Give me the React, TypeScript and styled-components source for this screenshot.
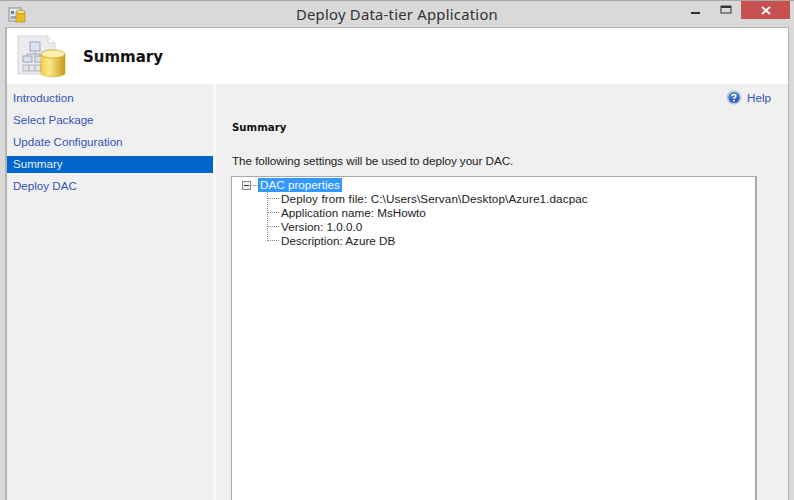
import React from "react";
import styled, { createGlobalStyle } from "styled-components";

const Global = createGlobalStyle`
  html, body { margin: 0; padding: 0; background: #d9d9d9; }
  body { font-family: "Liberation Sans", "Noto Sans", sans-serif; }
`;

const Window = styled.div`
  width: 794px;
  height: 500px;
  overflow: hidden;
  background: #d9d9d9;
  border-top: 1px solid #a8a8a8;
  box-sizing: border-box;
  display: flex;
  flex-direction: column;
`;
const TitleBar = styled.div`
  height: 26px;
  flex: none;
  display: flex;
  align-items: center;
  position: relative;
  padding-left: 8px;
`;
const Title = styled.div`
  position: absolute;
  left: 0;
  right: 0;
  top: 3px;
  text-align: center;
  font-family: "Noto Sans", sans-serif;
  font-size: 14.8px;
  line-height: 20px;
  color: #333;
  letter-spacing: 0.25px;
`;
const Controls = styled.div`
  margin-left: auto;
  display: flex;
  align-items: flex-start;
  height: 100%;
  margin-right: 4px;
`;
const CtrlBox = styled.div`
  width: 30px;
  height: 18px;
  display: flex;
  align-items: center;
  justify-content: center;
`;
const CloseBtn = styled.div`
  width: 49px;
  height: 18px;
  background: #c75050;
  display: flex;
  align-items: center;
  justify-content: center;
`;
const Client = styled.div`
  flex: 1;
  margin: 0 5px 0 5px;
  border: 1px solid #b4b4b4;
  border-left-width: 2px;
  border-bottom: 0;
  display: flex;
  flex-direction: column;
  min-height: 0;
`;
const Header = styled.div`
  height: 56px;
  flex: none;
  background: #fff;
  display: flex;
  align-items: center;
  padding-left: 10px;
  gap: 10px;
`;
const HeaderTitle = styled.div`
  font-family: "DejaVu Sans", sans-serif;
  font-weight: 700;
  font-size: 15px;
  color: #111;
  margin-top: 1px;
`;
const Body = styled.div`
  flex: 1;
  display: flex;
  min-height: 0;
`;
const Nav = styled.nav`
  width: 206px;
  flex: none;
  background: #f0f0f0;
  border-right: 3px solid #fafafa;
  padding-top: 6px;
  display: flex;
  flex-direction: column;
  gap: 5px;
`;
const NavItem = styled.div<{ $active?: boolean }>`
  height: 17px;
  line-height: 16px;
  font-size: 11.6px;
  padding-left: 6px;
  color: ${(p) => (p.$active ? "#e8eefa" : "#3355bb")};
  background: ${(p) => (p.$active ? "#0066cc" : "transparent")};
`;
const Main = styled.main`
  flex: 1;
  background: #f0f0f0;
  padding: 0 31px 0 16px;
  display: flex;
  flex-direction: column;
`;
const HelpRow = styled.div`
  display: flex;
  justify-content: flex-end;
  align-items: center;
  gap: 5px;
  height: 26px;
  margin-right: -14px;
  font-size: 11.7px;
  color: #3355bb;
`;
const SectionTitle = styled.div`
  font-family: "DejaVu Sans", sans-serif;
  font-weight: 700;
  font-size: 10.2px;
  color: #111;
  margin-top: 11px;
  height: 14px;
  line-height: 14px;
`;
const Intro = styled.div`
  font-size: 11.7px;
  color: #222;
  line-height: 15px;
  margin-top: 18px;
  letter-spacing: -0.06px;
`;
const TreeBox = styled.div`
  flex: 1;
  margin: 8px 0 -4px -1px;
  border: 1px solid #a6a9b2;
  border-right-width: 2px;
  background: #fff;
  padding: 1px 0 0 10px;
`;
const RootRow = styled.div`
  display: flex;
  align-items: center;
  height: 14px;
`;
const Expander = styled.div`
  width: 9px;
  height: 9px;
  border: 1px solid #8a8a8a;
  box-sizing: border-box;
  background: #eee;
  position: relative;
  flex: none;
  &::after {
    content: "";
    position: absolute;
    left: 1px;
    right: 1px;
    top: 3px;
    height: 1px;
    background: #333;
  }
`;
const Dash = styled.div`
  width: 7px;
  border-top: 1px dotted #888;
  flex: none;
`;
const RootLabel = styled.div`
  background: #3399ff;
  color: #f4f8ff;
  font-size: 11.7px;
  line-height: 14px;
  padding: 0 2px;
`;
const Children = styled.div`
  margin: -1px 0 0 25px;
  border-left: 1px dotted #888;
  width: fit-content;
  height: 50px;
`;
const Child = styled.div<{ $spacing?: number }>`
  display: flex;
  align-items: center;
  height: 14px;
  font-size: 11.7px;
  color: #222;
  background: #fff;
  letter-spacing: ${(p) => p.$spacing ?? 0}px;
`;
const ChildDash = styled.div`
  width: 11px;
  margin-right: 2px;
  border-top: 1px dotted #888;
  flex: none;
`;

const AppIcon = () => (
  <svg width="19" height="17" viewBox="0 0 19 17">
    <rect x="1" y="2" width="12" height="13" fill="#e8e8ee" stroke="#8a8a9a" />
    <rect x="3" y="5" width="3" height="3" fill="#5a7fc0" />
    <rect x="2.5" y="10" width="6" height="3" fill="#9ab" />
    <path d="M8 6v10h9V6z" fill="#eebb22" stroke="#a88010" strokeWidth=".6" />
    <ellipse cx="12.5" cy="6" rx="4.5" ry="1.8" fill="#f7e07a" stroke="#a88010" strokeWidth=".6" />
  </svg>
);

const WizardIcon = () => (
  <svg width="56" height="44" viewBox="0 0 56 44">
    <defs>
      <linearGradient id="cyl" x1="0" x2="1" y1="0" y2="0">
        <stop offset="0" stopColor="#f6cf45" />
        <stop offset=".35" stopColor="#fbe88a" />
        <stop offset="1" stopColor="#c89a14" />
      </linearGradient>
    </defs>
    <path d="M1 2H31L38 9V40H1Z" fill="#ececef" stroke="#d4d4d8" />
    <path d="M31 2V9H38" fill="#fafafa" stroke="#d4d4d8" />
    <g fill="#dde3ee" stroke="#9aa5b8" strokeWidth="1">
      <rect x="13" y="8" width="10" height="9" />
      <rect x="6" y="22" width="9" height="6" />
      <rect x="18" y="22" width="9" height="6" />
    </g>
    <path d="M18 17V20M10 22V20H23V22" fill="none" stroke="#9aa5b8" />
    <g fill="#e2e2e6" stroke="#b8b8be" strokeWidth="1">
      <rect x="6" y="31" width="6" height="6" />
      <rect x="12" y="31" width="6" height="6" />
      <rect x="18" y="31" width="6" height="6" />
    </g>
    <path d="M24 20V39C24 44 48 44 48 39V20Z" fill="url(#cyl)" stroke="#c89a14" strokeWidth=".5" />
    <ellipse cx="36" cy="20" rx="12" ry="4" fill="#fdf0b0" stroke="#c89a14" strokeWidth=".7" />
  </svg>
);

const HelpIcon = () => (
  <svg width="16" height="15" viewBox="0 0 16 15">
    <defs>
      <radialGradient id="h" cx=".4" cy=".35" r=".7">
        <stop offset="0" stopColor="#5d8fe0" />
        <stop offset="1" stopColor="#1d4fa8" />
      </radialGradient>
    </defs>
    <ellipse cx="8" cy="7.5" rx="7.5" ry="7" fill="#b8c6dc" />
    <ellipse cx="8" cy="7.5" rx="5.5" ry="5.2" fill="url(#h)" />
    <path d="M6 6c0-2 4-2 4 0 0 1.4-2 1.4-2 3" fill="none" stroke="#fff" strokeWidth="1.4" />
    <rect x="7.2" y="10" width="1.6" height="1.5" fill="#fff" />
  </svg>
);

export default function App() {
  return (
    <>
      <Global />
      <Window>
        <TitleBar>
          <AppIcon />
          <Title>Deploy Data-tier Application</Title>
          <Controls>
            <CtrlBox>
              <svg width="10" height="10" viewBox="0 0 10 10">
                <rect x="0" y="7" width="9" height="2" fill="#333" />
              </svg>
            </CtrlBox>
            <CtrlBox>
              <svg width="12" height="10" viewBox="0 0 12 10">
                <rect x="1" y="1" width="10" height="7" fill="none" stroke="#333" strokeWidth="1" />
                <rect x="1" y="1" width="10" height="2" fill="#333" />
              </svg>
            </CtrlBox>
            <CloseBtn>
              <svg width="10" height="9" viewBox="0 0 10 9">
                <path d="M1 1L9 8M9 1L1 8" stroke="#fff" strokeWidth="1.8" />
              </svg>
            </CloseBtn>
          </Controls>
        </TitleBar>
        <Client>
          <Header>
            <WizardIcon />
            <HeaderTitle>Summary</HeaderTitle>
          </Header>
          <Body>
            <Nav>
              <NavItem>Introduction</NavItem>
              <NavItem>Select Package</NavItem>
              <NavItem>Update Configuration</NavItem>
              <NavItem $active>Summary</NavItem>
              <NavItem>Deploy DAC</NavItem>
            </Nav>
            <Main>
              <HelpRow>
                <HelpIcon />
                Help
              </HelpRow>
              <SectionTitle>Summary</SectionTitle>
              <Intro>The following settings will be used to deploy your DAC.</Intro>
              <TreeBox>
                <RootRow>
                  <Expander />
                  <Dash />
                  <RootLabel>DAC properties</RootLabel>
                </RootRow>
                <Children>
                  <Child $spacing={0.11}><ChildDash />Deploy from file: C:\Users\Servan\Desktop\Azure1.dacpac</Child>
                  <Child><ChildDash />Application name: MsHowto</Child>
                  <Child><ChildDash />Version: 1.0.0.0</Child>
                  <Child><ChildDash />Description: Azure DB</Child>
                </Children>
              </TreeBox>
            </Main>
          </Body>
        </Client>
      </Window>
    </>
  );
}
